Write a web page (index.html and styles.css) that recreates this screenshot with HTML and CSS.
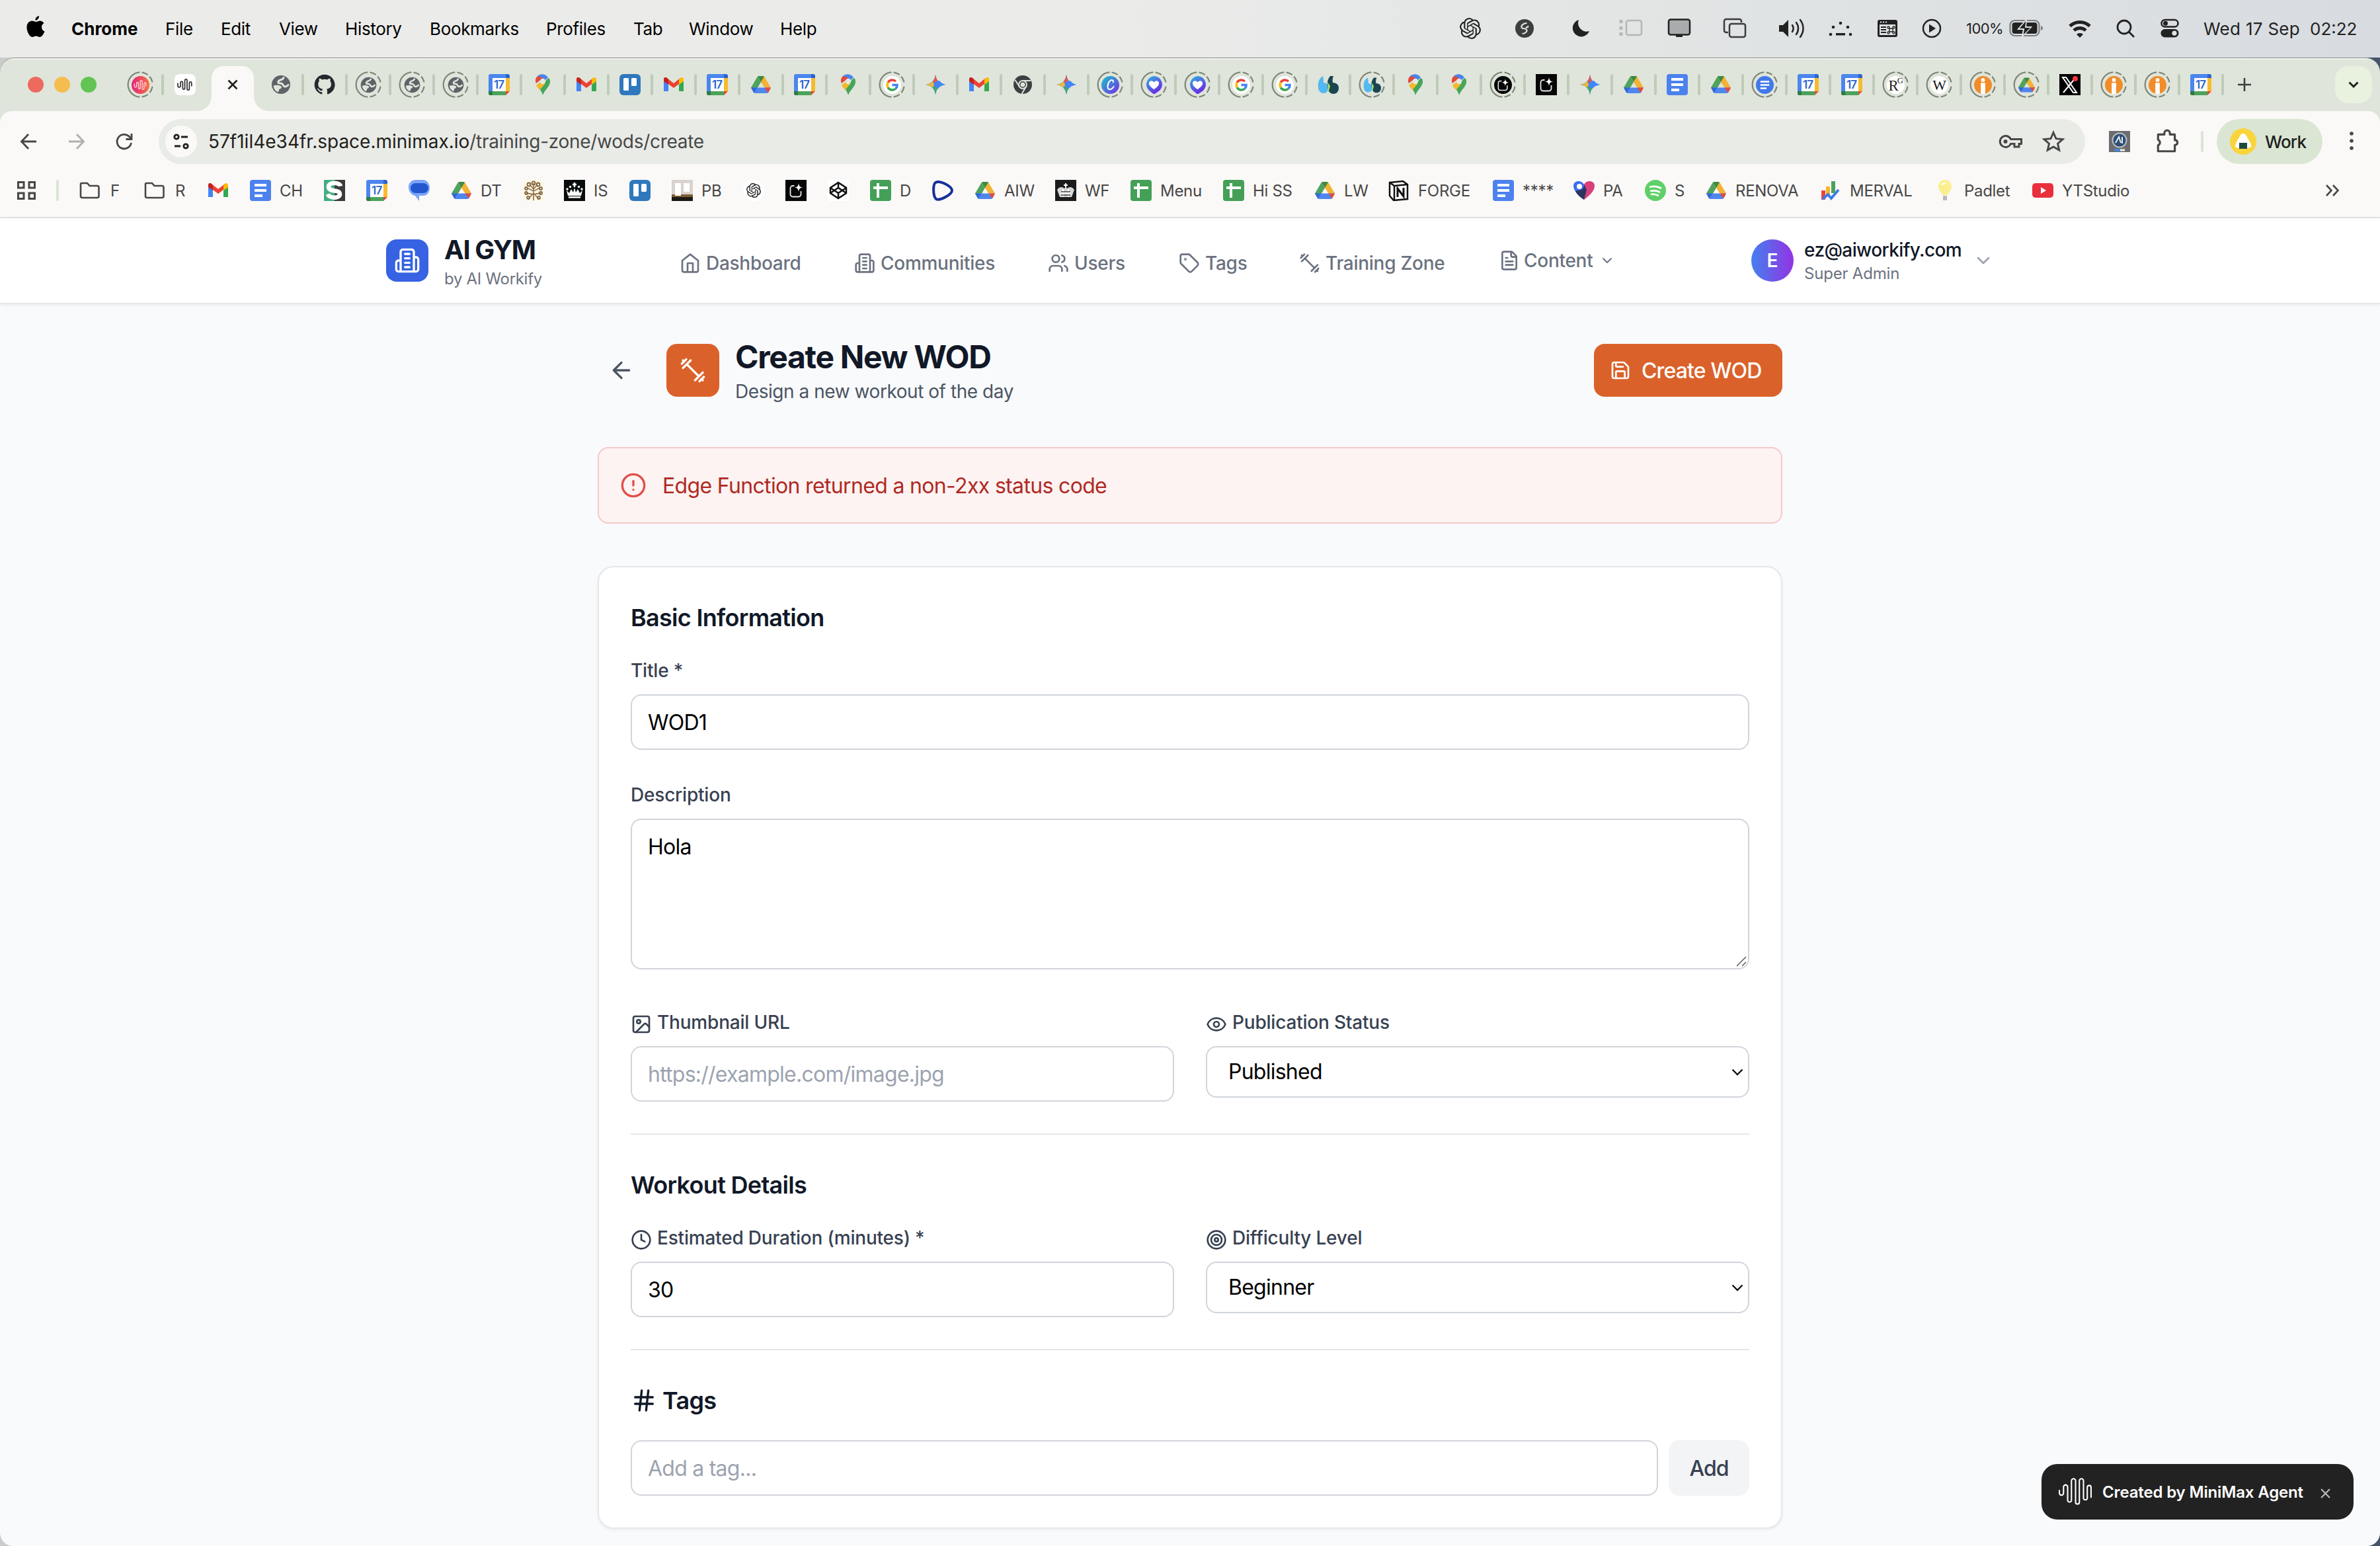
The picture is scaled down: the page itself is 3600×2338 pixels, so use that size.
FILE: index.html
```html
<!DOCTYPE html>
<html lang="en">
<head>
<meta charset="utf-8">
<title>AI GYM - Create New WOD</title>
<link rel="stylesheet" href="styles.css">
</head>
<body>
<svg class="gradients" aria-hidden="true">
  <defs>
    <linearGradient id="canva" x1="0" y1="0" x2="1" y2="1"><stop offset="0" stop-color="#16c5cb"/><stop offset="1" stop-color="#7a2be6"/></linearGradient>
    <linearGradient id="heartg" x1="0" y1="0" x2=".6" y2="1"><stop offset="0" stop-color="#2fb6dc"/><stop offset="1" stop-color="#6a25e8"/></linearGradient>
    <linearGradient id="mm" x1="0" y1="0" x2="1" y2="0"><stop offset="0" stop-color="#e0257c"/><stop offset="1" stop-color="#f8703f"/></linearGradient>
  </defs>
</svg>
<svg class="sprite" aria-hidden="true">
  <symbol id="globe" viewBox="0 0 32 32"><circle cx="16" cy="16" r="14" fill="#5f6368"/><path d="M20 5.500c-1 2.500-3 3-5 3.500-2.500.700-3.500 2-3 4.500 2 1 4 .200 5.500 1 2 1.200 1.500 4 4 4.500 2 .300 4-1 5.500-2.500" fill="none" stroke="#dfe5da" stroke-width="3" stroke-linecap="round" stroke-linejoin="round"/><path d="M4.500 17.500c4-1.500 9-1 12 1 1 2.500-1 4-3.500 4.500.5 2-.5 3.500-2 4.200-3.500-1.700-6-5-6.500-9.700z" fill="#dfe5da"/></symbol>
  <symbol id="github" viewBox="0 0 24 24"><path fill="#24292f" d="M12 .5C5.600.5.5 5.600.5 12c0 5.100 3.300 9.400 7.900 10.900.6.1.8-.2.8-.6v-2c-3.200.7-3.900-1.500-3.900-1.500-.5-1.300-1.300-1.700-1.300-1.700-1-.7.1-.7.1-.7 1.200.1 1.800 1.200 1.800 1.200 1 1.800 2.700 1.300 3.400 1 .1-.8.4-1.300.7-1.600-2.600-.3-5.300-1.300-5.300-5.700 0-1.300.5-2.300 1.200-3.100-.1-.3-.5-1.500.1-3.100 0 0 1-.3 3.200 1.200a11 11 0 0 1 5.800 0c2.200-1.500 3.200-1.200 3.200-1.200.6 1.600.2 2.800.1 3.100.7.8 1.200 1.800 1.200 3.100 0 4.400-2.700 5.400-5.300 5.700.4.4.8 1.100.8 2.100v3.200c0 .3.2.7.8.6 4.600-1.500 7.900-5.800 7.900-10.900C23.500 5.600 18.400.5 12 .5z"/></symbol>
  <symbol id="cal" viewBox="0 0 32 32"><path d="M3 0h23v6H0V3a3 3 0 0 1 3-3z" fill="#4b86ee"/><path d="M26 0h3a3 3 0 0 1 3 3v4h-6z" fill="#2b63cf"/><path d="M0 5h6v21H0z" fill="#4b86ee"/><path d="M26 6h6v20h-6z" fill="#f6bb2f"/><path d="M6 26h20v6H3a3 3 0 0 1-3-3v-3z" fill="#4ba35b"/><path d="M0 26h6v6H3a3 3 0 0 1-3-3z" fill="#2f7a43"/><path d="M26 32v-6h6z" fill="#e34a3c"/><path d="M6 6h20v20H6z" fill="#fff"/><text x="16" y="22" font-size="17" font-weight="600" fill="#2b63cf" text-anchor="middle" textLength="16">17</text></symbol>
  <symbol id="maps" viewBox="0 0 32 32"><path d="M26 7c2 4 1 8-1 11-3 5-7 8-9 14-1-4-3-7-5-10L24 6z" fill="#45a65a"/><path d="M8 3c4-4 12-4 16 2l-7 7z" fill="#4a84ee"/><path d="M8 3c-3 3-4 7-2 11l5-4 5-1-1-4z" fill="#e04a3d"/><path d="M12 12l-6 5c1 2.500 3 4.500 5.500 7l8-9.500z" fill="#f3b92e"/><circle cx="16" cy="11" r="4.200" fill="#e3e9e0"/></symbol>
  <symbol id="gmail" viewBox="0 0 32 32"><path d="M1 8v18h7V13z" fill="#4285f4"/><path d="M31 8v18h-7V13z" fill="#34a853"/><path d="M1 8c0-3 3-4 5-2l10 8 10-8v7.500L16 21 1 10z" fill="#ea4335"/><path d="M24 8l2-2c2-2 5-1 5 2v3l-7 5z" fill="#fbbc04"/><path d="M1 8c0-3 3-4 5-2l2 2v8l-7-5z" fill="#c5221f"/></symbol>
  <symbol id="trello" viewBox="0 0 32 32"><rect width="32" height="32" rx="6" fill="#2f78bd"/><rect x="6" y="6" width="8" height="19" rx="1.500" fill="#fff"/><rect x="18" y="6" width="8" height="12" rx="1.500" fill="#fff"/></symbol>
  <symbol id="drive" viewBox="0 0 32 32"><path d="M11 3.500l5 8.500-5 8.500L5.500 28 1 20.500z" fill="#4fa35c"/><path d="M21 3.500l10 17h-9.500L16 12l-5-8.500z" fill="#f3b233"/><path d="M11 3.500Q12 3 13 3h6q1 0 2 .5L16 12z" fill="#3b8a45"/><path d="M1 20.500h30L27 28q-1 1-2 1H7q-1 0-2-1z" fill="#4f86ee"/><path d="M21.500 20.500H31L27 28.200z" fill="#e34a3c"/><path d="M1 20.500h9.500L5.500 28.400z" fill="#3468d4"/></symbol>
  <symbol id="google" viewBox="0 0 32 32"><circle cx="16" cy="16" r="16" fill="#fff"/><g fill="none" stroke-width="4.200"><path d="M22.500 9.500A9 9 0 0 0 8.500 11.500" stroke="#ea4335"/><path d="M8.500 11.500a9 9 0 0 0 0 9" stroke="#fbbc04"/><path d="M8.500 20.500a9 9 0 0 0 13.500 2.300" stroke="#34a853"/><path d="M22 22.800A9 9 0 0 0 24.900 16H16" stroke="#4285f4"/></g></symbol>
  <symbol id="gemini" viewBox="0 0 32 32"><path d="M16 1c1.500 9 6 13.500 15 15-9 1.500-13.500 6-15 15-1.500-9-6-13.500-15-15 9-1.500 13.500-6 15-15z" fill="#4285f4"/><path d="M16 1c1 6 3 10 6 12l-10 1-2-1c3-2 5-6 6-12z" fill="#e4564a"/><path d="M1 16c6-1 9-3 11-5l2 5-2 5c-2-2-5-4-11-5z" fill="#e9b93c"/><path d="M16 31c-1-6-2-8-5-11l5-3 4 4c-2 2-3 5-4 10z" fill="#44a865"/><path d="M14 12l8-2c2 3 5 5 9 6-6 1-9 3-11 6l-6-3z" fill="#4285f4"/></symbol>
  <symbol id="chrome" viewBox="0 0 32 32"><circle cx="16" cy="16" r="14" fill="#3c4043"/><circle cx="16" cy="16" r="6" fill="none" stroke="#dfe5da" stroke-width="2"/><circle cx="16" cy="16" r="3.500" fill="#dfe5da"/><path d="M16 10h12.500M11 19L4.500 9M21 19l-6.500 11" stroke="#dfe5da" stroke-width="2"/></symbol>
  <symbol id="canv" viewBox="0 0 32 32"><circle cx="16" cy="16" r="16" fill="url(#canva)"/><path d="M21 11c1-4-3-5-6-2-5 5-5 15 0 15 3 0 5-2 7-5" fill="none" stroke="#fff" stroke-width="2.400" stroke-linecap="round"/></symbol>
  <symbol id="heart" viewBox="0 0 32 32"><path d="M16 0a15 15 0 0 1 8 27.500L16 33l-6-5A15 15 0 0 1 16 0z" fill="url(#heartg)"/><path d="M16 24c-5-4-9-7-9-11 0-5 6-6 9-2 3-4 9-3 9 2 0 4-4 7-9 11z" fill="#fff"/></symbol>
  <symbol id="quote" viewBox="0 0 32 32"><path d="M8 3C3 6 0 12 1 20c0 6 4 9 8 9s7-3 7-8-3-8-7-8c0-4 0-7-1-10z" fill="#54b8f2"/><path d="M19 3h5c-1 3-2 6-1 10 6 0 9 4 9 8 0 5-3 9-8 9s-8-4-9-10 0-12 4-17z" fill="#1c4552"/><path d="M15 12l4 6-3 11c-1-4 0-10-1-17z" fill="#a7e868"/></symbol>
  <symbol id="blk" viewBox="0 0 32 32"><rect width="32" height="32" fill="#050505"/><path d="M13.500 9H11a3.500 3.500 0 0 0-3.500 3.500V22a3.500 3.500 0 0 0 3.500 3.500h9a3.500 3.500 0 0 0 3.500-3.500v-5" fill="none" stroke="#e8e8e8" stroke-width="1.800"/><path d="M20 5c.6 4.500 2 6 6.500 6.500-4.500.5-5.900 2-6.500 6.500-.6-4.500-2-6-6.500-6.500 4.500-.5 5.900-2 6.500-6.500z" fill="#fff"/></symbol>
  <symbol id="docs" viewBox="0 0 32 32"><rect width="32" height="32" rx="4" fill="#4d82ee"/><path d="M7 8h18M7 16h18M7 24h12" stroke="#fff" stroke-width="4"/></symbol>
  <symbol id="docsr" viewBox="0 0 32 32"><circle cx="16" cy="16" r="16" fill="#4179ea"/><path d="M8 10h16M8 16h16M8 22h11" stroke="#fff" stroke-width="3"/></symbol>
  <symbol id="rg" viewBox="0 0 32 32"><circle cx="16" cy="16" r="16" fill="#fff"/><text class="serif" x="12" y="26" font-size="27" text-anchor="middle" fill="#222">R</text><text class="serif" x="24" y="13" font-size="15" text-anchor="middle" fill="#222">G</text></symbol>
  <symbol id="wiki" viewBox="0 0 32 32"><circle cx="16" cy="16" r="16" fill="#fff"/><text class="serif" x="16" y="25" font-size="26" text-anchor="middle" fill="#111">W</text></symbol>
  <symbol id="info" viewBox="0 0 32 32"><circle cx="16" cy="16" r="16" fill="#f28c28"/><circle cx="16" cy="7" r="3.500" fill="#fff"/><path d="M12 12h8v20h-8z" fill="#fff"/></symbol>
  <symbol id="xcom" viewBox="0 0 32 32"><rect width="32" height="32" fill="#000"/><path d="M5 5h5l16 23h-5z" fill="none" stroke="#fff" stroke-width="2"/><path d="M25 5L6 28" stroke="#fff" stroke-width="2"/><circle cx="24" cy="7" r="4" fill="#f4373c"/></symbol>
  <symbol id="wave" viewBox="0 0 48 40"><path d="M1 18v4a3 3 0 0 0 6 0V13a3 3 0 0 1 6 0v20a3 3 0 0 0 5.500 0V4a3 3 0 0 1 6 0v19M24.500 30v5a2.700 2.700 0 0 0 5.500 0V4a3 3 0 0 1 6 0v26a3 3 0 0 0 5.500 0V13a2.800 2.800 0 0 1 5.500 0v15M24.500 10v19" fill="none" stroke="currentColor" stroke-width="2" stroke-linecap="round"/></symbol>
  <symbol id="waves" viewBox="0 0 32 32"><path d="M5 14v4a2 2 0 0 0 4 0v-5a1.700 1.700 0 0 1 3.400 0v9a1.700 1.700 0 0 0 3.200 0V9.500a1.700 1.700 0 0 1 3.400 0v13a1.700 1.700 0 0 0 3.400 0v-9a1.700 1.700 0 0 1 3.400 0V18" fill="none" stroke="currentColor" stroke-width="1.600" stroke-linecap="round"/></symbol>
  <symbol id="sheet" viewBox="0 0 32 32"><rect width="32" height="32" rx="4" fill="#45a057"/><path d="M12 5v22M5 12h22" stroke="#fff" stroke-width="4"/></symbol>
  <symbol id="openai" viewBox="0 0 24 24"><path fill="currentColor" d="M22.2819 9.8211a5.9847 5.9847 0 0 0-.5157-4.9108 6.0462 6.0462 0 0 0-6.5098-2.9A6.0651 6.0651 0 0 0 4.9807 4.1818a5.9847 5.9847 0 0 0-3.9977 2.9 6.0462 6.0462 0 0 0 .7427 7.0966 5.98 5.98 0 0 0 .511 4.9107 6.051 6.051 0 0 0 6.5146 2.9001A5.9847 5.9847 0 0 0 13.2599 24a6.0557 6.0557 0 0 0 5.7718-4.2058 5.9894 5.9894 0 0 0 3.9977-2.9001 6.0557 6.0557 0 0 0-.7475-7.0729zm-9.022 12.6081a4.4755 4.4755 0 0 1-2.8764-1.0408l.1419-.0804 4.7783-2.7582a.7948.7948 0 0 0 .3927-.6813v-6.7369l2.02 1.1686a.071.071 0 0 1 .038.052v5.5826a4.504 4.504 0 0 1-4.4945 4.4944zm-9.6607-4.1254a4.4708 4.4708 0 0 1-.5346-3.0137l.142.0852 4.783 2.7582a.7712.7712 0 0 0 .7806 0l5.8428-3.3685v2.3324a.0804.0804 0 0 1-.0332.0615L9.74 19.9502a4.4992 4.4992 0 0 1-6.1408-1.6464zM2.3408 7.8956a4.485 4.485 0 0 1 2.3655-1.9728V11.6a.7664.7664 0 0 0 .3879.6765l5.8144 3.3543-2.0201 1.1685a.0757.0757 0 0 1-.071 0l-4.8303-2.7865A4.504 4.504 0 0 1 2.3408 7.872zm16.5963 3.8558L13.1038 8.364 15.1192 7.2a.0757.0757 0 0 1 .071 0l4.8303 2.7913a4.4944 4.4944 0 0 1-.6765 8.1042v-5.6772a.79.79 0 0 0-.407-.667zm2.0107-3.0231l-.142-.0852-4.7735-2.7818a.7759.7759 0 0 0-.7854 0L9.409 9.2297V6.8974a.0662.0662 0 0 1 .0284-.0615l4.8303-2.7866a4.4992 4.4992 0 0 1 6.6802 4.66zM8.3065 12.863l-2.02-1.1638a.0804.0804 0 0 1-.038-.0567V6.0742a4.4992 4.4992 0 0 1 7.3757-3.4537l-.142.0805L8.704 5.459a.7948.7948 0 0 0-.3927.6813zm1.0976-2.3654l2.602-1.4998 2.6069 1.4998v2.9994l-2.5974 1.4997-2.6067-1.4997Z"/></symbol>
  <symbol id="folder" viewBox="0 0 32 32"><path d="M3.500 5H12l3.500 4H27a2.500 2.500 0 0 1 2.500 2.500v13A2.500 2.500 0 0 1 27 27H4.500A2.500 2.500 0 0 1 2 24.500v-18A1.500 1.500 0 0 1 3.500 5z" fill="none" stroke="#474747" stroke-width="2.600"/></symbol>
  <symbol id="ring" viewBox="0 0 40 40"><path d="M18.500 1.300a18.800 18.800 0 0 0 0 37.400M23.500 1.600a18.800 18.800 0 0 1 7.500 3.100M34.700 8.300a18.800 18.800 0 0 1 3.600 7.300M38.400 23.500a18.800 18.800 0 0 1-3.400 7.800M31 35.300a18.800 18.800 0 0 1-7.500 3.100" fill="none" stroke="#7e8678" stroke-width="2.200" stroke-linecap="round"/></symbol>
  <symbol id="building" viewBox="0 0 24 24"><path d="M6 22V4a2 2 0 0 1 2-2h8a2 2 0 0 1 2 2v18ZM6 12H4a2 2 0 0 0-2 2v6a2 2 0 0 0 2 2h2M18 9h2a2 2 0 0 1 2 2v9a2 2 0 0 1-2 2h-2M10 6h4M10 10h4M10 14h4M10 18h4"/></symbol>
  <symbol id="dumbbell" viewBox="0 0 24 24"><path d="m6.500 6.500 11 11M21 21l-1-1M3 3l1 1M18 22l4-4M2 6l4-4M3 10l7-7M14 21l7-7"/></symbol>
  <symbol id="chev" viewBox="0 0 24 24"><path d="m6 9 6 6 6-6"/></symbol>
</svg>

<header class="menubar">
  <nav class="menus">
    <svg class="apple" viewBox="0 0 27 32"><path d="M20 7.500c-2.500 0-4 1.600-6 1.600S10.500 7.600 8 7.600C4 7.600 0 11 0 17.500 0 24 4.500 32 8.500 32c2 0 3-1.400 5.500-1.400s3.300 1.400 5.500 1.400c3.500 0 6.200-5 7.500-8.500-2.800-1.200-4.500-3.500-4.500-6.500 0-2.500 1.300-4.700 3.500-6C24.300 8.500 22 7.500 20 7.500zM18.500 0c.3 3.500-2.500 6.800-5.500 6.800C12.700 3.500 15.500.300 18.500 0z"/></svg>
    <b>Chrome</b><span>File</span><span>Edit</span><span>View</span><span>History</span><span>Bookmarks</span><span>Profiles</span><span>Tab</span><span>Window</span><span>Help</span>
  </nav>
  <div class="status">
    <svg><use href="#openai"/></svg>
    <svg viewBox="0 0 32 32"><circle cx="16" cy="16" r="14" fill="#3d3e3e"/><path d="M19.500 8c-5 0-9 3.500-8 6.500s6 .5 7.500 3-1 6.500-6.500 6.500M21 12c1 2-1 3-3 2" fill="none" stroke="#e6e8e7" stroke-width="2"/></svg>
    <svg viewBox="0 0 32 32"><path d="M12 3a13 13 0 1 0 16 17A13 13 0 0 1 12 3z"/></svg>
    <svg class="wide" viewBox="0 0 38 32" fill="none" stroke="#b4b7b7" stroke-width="2.600"><rect x="12" y="4" width="23" height="22" rx="3"/><path d="M4 3v5M4 13v5M4 22v5" stroke-width="5"/></svg>
    <svg class="wide" viewBox="0 0 38 32"><rect x="3" y="2.500" width="32" height="23" rx="3" fill="#a9abac" stroke="#222" stroke-width="2.500"/><path d="M14 25h10v4H14z"/></svg>
    <svg class="wide" viewBox="0 0 38 32" fill="none" stroke="#3a3b3c" stroke-width="2.500"><path d="M9 22H6a3 3 0 0 1-3-3V5a3 3 0 0 1 3-3h20a3 3 0 0 1 3 3v2"/><rect x="11" y="9" width="24" height="20" rx="3"/></svg>
    <svg class="vol" viewBox="0 0 40 32"><path d="M1 11h6l8-8v26l-8-8H1z"/><path d="M21 11c2 3 2 7 0 10M27 7c4 5 4 13 0 18M33 3c6 8 6 18 0 26" fill="none" stroke="#222" stroke-width="2.500" stroke-linecap="round"/></svg>
    <svg class="wide" viewBox="0 0 38 32"><circle cx="19" cy="8" r="2.300"/><circle cx="8" cy="14" r="2.300"/><circle cx="30" cy="14" r="2.300"/><circle cx="4" cy="25" r="2.300"/><circle cx="34" cy="25" r="2.300"/><path d="M12 23h14v3.500H12z"/></svg>
    <svg viewBox="0 0 32 32"><path fill-rule="evenodd" d="M4 3h24a3 3 0 0 1 3 3v20a3 3 0 0 1-3 3H4a3 3 0 0 1-3-3V6a3 3 0 0 1 3-3zm0 7v16h24V10z"/><path d="M6 14h8M6 18h8M6 22h8" stroke="#222" stroke-width="2"/><path d="M19 16h5v5h-5zM19 16h-1.500a1.500 1.500 0 1 1 1.500-1.500zM24 16h1.500a1.500 1.500 0 1 0-1.500-1.500zM19 21h-1.500a1.500 1.500 0 1 0 1.500 1.500zM24 21h1.500a1.500 1.500 0 1 1-1.500 1.500z" fill="none" stroke="#222" stroke-width="1.300"/><path d="M5 6.500h2M9 6.500h2M13 6.500h2" stroke="#eee" stroke-width="2"/></svg>
    <svg viewBox="0 0 32 32"><circle cx="16" cy="16" r="13" fill="none" stroke="#222" stroke-width="2.500"/><path d="M12 9.500L22 16l-10 6.500z"/></svg>
    <span class="pct">100%</span>
    <svg class="batt" viewBox="0 0 52 32"><rect x="1.500" y="4" width="44" height="23" rx="7" fill="none" stroke="#7d8082" stroke-width="2.200"/><rect x="4.500" y="7" width="38" height="17" rx="4"/><path d="M48 12c4 1 4 6 0 7z" fill="#7d8082"/><path d="M26 3L14 17h8l-2 11 13-14h-8z" stroke="#dfe2e4" stroke-width="2"/><path d="M25 5L16 16h8l-2 9 10-10h-8z"/></svg>
    <svg class="wide" viewBox="0 0 38 32" fill="none" stroke="#222" stroke-width="5"><path d="M4 12.500a21.500 21.500 0 0 1 30 0M10 19a13 13 0 0 1 18 0"/><path d="M19 30l-5-5a7 7 0 0 1 10 0z" fill="#222" stroke="none"/></svg>
    <svg viewBox="0 0 32 32" fill="none" stroke="#222" stroke-width="2.800"><circle cx="14" cy="14" r="10"/><path d="M21 21l8 8"/></svg>
    <svg viewBox="0 0 32 32"><rect x="3.500" y="3" width="25" height="10.500" rx="5.200" fill="none" stroke="#222" stroke-width="2.500"/><circle cx="9.500" cy="8.200" r="3.500"/><rect x="2.500" y="17" width="27" height="12.500" rx="6.200"/><circle cx="23" cy="23.200" r="3.600" fill="#e0e3e5"/></svg>
    <span class="day">Wed 17 Sep</span><span class="time">02:22</span>
  </div>
</header>

<div class="window">
  <div class="tabstrip">
    <div class="lights"><i class="red"></i><i class="amber"></i><i class="green"></i></div>
    <div class="pinned">
      <div class="tab sep"><svg class="ring"><use href="#ring"/></svg><svg viewBox="0 0 32 32" class="fav small white"><circle cx="16" cy="16" r="16" fill="url(#mm)"/><use href="#waves"/></svg></div>
      <div class="tab"><svg viewBox="0 0 32 32" class="fav"><rect width="32" height="32" rx="8" fill="#fff"/><use href="#waves"/></svg></div>
    </div>
    <div class="active-tab"><svg viewBox="0 0 16 16"><path d="M1.500 1.500l13 13M14.500 1.500l-13 13"/></svg></div>
    <div class="tabs">
      <div class="tab sep"><svg class="fav"><use href="#globe"/></svg></div>
      <div class="tab sep"><svg class="fav"><use href="#github"/></svg></div>
      <div class="tab sep"><svg class="ring"><use href="#ring"/></svg><svg class="fav small"><use href="#globe"/></svg></div>
      <div class="tab sep"><svg class="ring"><use href="#ring"/></svg><svg class="fav small"><use href="#globe"/></svg></div>
      <div class="tab sep"><svg class="ring"><use href="#ring"/></svg><svg class="fav small"><use href="#globe"/></svg></div>
      <div class="tab sep"><svg class="fav"><use href="#cal"/></svg></div>
      <div class="tab sep"><svg class="fav"><use href="#maps"/></svg></div>
      <div class="tab sep"><svg class="fav"><use href="#gmail"/></svg></div>
      <div class="tab sep"><svg class="fav"><use href="#trello"/></svg></div>
      <div class="tab sep"><svg class="fav"><use href="#gmail"/></svg></div>
      <div class="tab sep"><svg class="fav"><use href="#cal"/></svg></div>
      <div class="tab sep"><svg class="fav"><use href="#drive"/></svg></div>
      <div class="tab sep"><svg class="fav"><use href="#cal"/></svg></div>
      <div class="tab sep"><svg class="fav"><use href="#maps"/></svg></div>
      <div class="tab sep"><svg class="ring"><use href="#ring"/></svg><svg class="fav small"><use href="#google"/></svg></div>
      <div class="tab sep"><svg class="fav"><use href="#gemini"/></svg></div>
      <div class="tab sep"><svg class="fav"><use href="#gmail"/></svg></div>
      <div class="tab sep"><svg class="fav"><use href="#chrome"/></svg></div>
      <div class="tab sep"><svg class="fav"><use href="#gemini"/></svg></div>
      <div class="tab sep"><svg class="ring"><use href="#ring"/></svg><svg class="fav small"><use href="#canv"/></svg></div>
      <div class="tab sep"><svg class="ring"><use href="#ring"/></svg><svg class="fav small"><use href="#heart"/></svg></div>
      <div class="tab sep"><svg class="ring"><use href="#ring"/></svg><svg class="fav small"><use href="#heart"/></svg></div>
      <div class="tab sep"><svg class="ring"><use href="#ring"/></svg><svg class="fav small"><use href="#google"/></svg></div>
      <div class="tab sep"><svg class="ring"><use href="#ring"/></svg><svg class="fav small"><use href="#google"/></svg></div>
      <div class="tab sep"><svg class="fav"><use href="#quote"/></svg></div>
      <div class="tab sep"><svg class="ring"><use href="#ring"/></svg><svg class="fav small"><use href="#quote"/></svg></div>
      <div class="tab sep"><svg class="fav"><use href="#maps"/></svg></div>
      <div class="tab sep"><svg class="fav"><use href="#maps"/></svg></div>
      <div class="tab sep"><svg class="ring"><use href="#ring"/></svg><svg class="fav small round"><use href="#blk"/></svg></div>
      <div class="tab sep"><svg class="fav"><use href="#blk"/></svg></div>
      <div class="tab sep"><svg class="fav"><use href="#gemini"/></svg></div>
      <div class="tab sep"><svg class="fav"><use href="#drive"/></svg></div>
      <div class="tab sep"><svg class="fav"><use href="#docs"/></svg></div>
      <div class="tab sep"><svg class="fav"><use href="#drive"/></svg></div>
      <div class="tab sep"><svg class="ring"><use href="#ring"/></svg><svg class="fav small"><use href="#docsr"/></svg></div>
      <div class="tab sep"><svg class="fav"><use href="#cal"/></svg></div>
      <div class="tab sep"><svg class="fav"><use href="#cal"/></svg></div>
      <div class="tab sep"><svg class="ring"><use href="#ring"/></svg><svg class="fav small"><use href="#rg"/></svg></div>
      <div class="tab sep"><svg class="ring"><use href="#ring"/></svg><svg class="fav small"><use href="#wiki"/></svg></div>
      <div class="tab sep"><svg class="ring"><use href="#ring"/></svg><svg class="fav small"><use href="#info"/></svg></div>
      <div class="tab sep"><svg class="ring"><use href="#ring"/></svg><svg class="fav small"><use href="#drive"/></svg></div>
      <div class="tab sep"><svg class="fav"><use href="#xcom"/></svg></div>
      <div class="tab sep"><svg class="ring"><use href="#ring"/></svg><svg class="fav small"><use href="#info"/></svg></div>
      <div class="tab sep"><svg class="ring"><use href="#ring"/></svg><svg class="fav small"><use href="#info"/></svg></div>
      <div class="tab sep"><svg class="fav"><use href="#cal"/></svg></div>
      <div class="tab"><svg class="plus" viewBox="0 0 22 22"><path d="M11 1v20M1 11h20"/></svg></div>
    </div>
    <div class="tabsearch"><svg viewBox="0 0 16 10"><path d="M1.500 1.500L8 8l6.500-6.500"/></svg></div>
  </div>

  <div class="toolbar">
    <div class="navbtns">
      <svg viewBox="0 0 32 32"><path d="M27 16H5M15 5L4.500 16 15 27"/></svg>
      <svg class="off" viewBox="0 0 32 32"><path d="M5 16h22M17 5l10.500 11L17 27"/></svg>
      <svg viewBox="0 0 32 32"><path d="M26.500 18A10.800 10.800 0 1 1 23.500 8.500L27 12M27 4v8.500h-8.500"/></svg>
    </div>
    <div class="omnibox">
      <span class="tune"><svg viewBox="0 0 26 26"><circle cx="6" cy="6" r="3.200"/><path d="M13 6h10M3 20h9"/><circle cx="20" cy="20" r="3.200"/></svg></span>
      <span class="url"><span class="host">57f1il4e34fr.space.minimax.io</span><span class="path">/training-zone/wods/create</span></span>
      <svg class="key" viewBox="0 0 38 32" fill="none" stroke="#474747" stroke-width="3"><path d="M19.500 12.500A8.500 8.500 0 1 0 19.500 19.500H25V24h7v-4.500h3.500v-7z"/><circle cx="11.500" cy="16" r="3" fill="#474747" stroke="none"/></svg>
      <svg class="star" viewBox="0 0 32 32" fill="none" stroke="#474747" stroke-width="2.600"><path d="M16 4l3.600 8.200 8.900.8-6.700 5.900 2 8.700L16 23l-7.800 4.600 2-8.700L3.500 13l8.900-.8z"/></svg>
    </div>
    <svg class="ext" viewBox="0 0 32 32"><rect width="32" height="32" fill="#6b6d70"/><circle cx="16" cy="14" r="10.500" fill="#2c4e73" stroke="#b9bdc2" stroke-width="2"/><path d="M10 18l5-9 3 9M20 9v10" stroke="#e6ecf2" stroke-width="2" fill="none"/><path d="M8 29h9" stroke="#3f8cf0" stroke-width="3"/><path d="M17 29h7" stroke="#eee" stroke-width="3"/></svg>
    <svg class="puzzle" viewBox="0 0 36 36" fill="none" stroke="#474747" stroke-width="3"><path d="M5 8h9V6a4 4 0 0 1 8 0v2h7v8h1a3.600 3.600 0 0 1 0 7h-1v9H5v-8.500a4.300 4.300 0 0 0 0-8z" stroke-linejoin="round"/></svg>
    <i class="tsep"></i>
    <div class="profile"><svg viewBox="0 0 40 40"><circle cx="20" cy="20" r="20" fill="#f9d43c"/><path d="M20 8c4 0 5 4 8 9s5 8 4 11-24 3-24 0 1-6 4-11 4-9 8-9z" fill="#fff"/><path d="M14 22h12v9H14z" fill="#1d4a3f"/></svg><span>Work</span></div>
    <svg class="kebab" viewBox="0 0 8 32"><circle cx="4" cy="4" r="2.800"/><circle cx="4" cy="15" r="2.800"/><circle cx="4" cy="26" r="2.800"/></svg>
  </div>

  <div class="bookmarks">
    <span class="bm"><svg viewBox="0 0 32 32" fill="none" stroke="#474747" stroke-width="3"><path d="M3.500 3.500h8.500v8.500H3.500zM20 3.500h8.500v8.500H20zM3.500 20h8.500v8.500H3.500zM20 20h8.500v8.500H20z"/></svg></span>
    <span class="bm"><i class="tsep"></i></span>
    <span class="bm dir"><svg><use href="#folder"/></svg>F</span>
    <span class="bm dir"><svg><use href="#folder"/></svg>R</span>
    <span class="bm"><svg><use href="#gmail"/></svg></span>
    <span class="bm"><svg><use href="#docs"/></svg>CH</span>
    <span class="bm"><svg viewBox="0 0 32 32"><path d="M0 0h16v32H0z" fill="#45ad80"/><path d="M16 0h16v32H16z" fill="#3b3b3b"/><path d="M25 9.500c-1-6-18-7-18 1 0 9 17 3 17 11 0 7-16 7-18 0" fill="none" stroke="#fff" stroke-width="6.500"/></svg></span>
    <span class="bm"><svg><use href="#cal"/></svg></span>
    <span class="bm"><svg viewBox="0 0 32 32"><path d="M11 0h11c6 0 10 6 10 12 0 7-4 12-10 12h-6v8l-6-8C4 23 0 17 0 11 0 4 5 0 11 0z" fill="#7ba5fa"/><rect x="3" y="5" width="27" height="15" rx="7.500" fill="#2257cf"/></svg></span>
    <span class="bm"><svg><use href="#drive"/></svg>DT</span>
    <span class="bm"><svg viewBox="0 0 32 32"><rect width="32" height="32" fill="#fbf8e8"/><path d="M16 5v26M16 17L6 12M16 17l10-5M16 22L5 20M16 22l11-2M9 28l7-8 7 8M10 7l6 7 6-7" stroke="#9b7a55" stroke-width="1.800" fill="none"/><g fill="none" stroke="#85643f" stroke-width="1.800"><circle cx="16" cy="5" r="2.500"/><circle cx="9" cy="7" r="2.500"/><circle cx="23" cy="7" r="2.500"/><circle cx="5" cy="13" r="2"/><circle cx="27" cy="13" r="2"/><circle cx="5" cy="20" r="2"/><circle cx="27" cy="20" r="2"/><circle cx="8" cy="27" r="2"/><circle cx="24" cy="27" r="2"/></g></svg></span>
    <span class="bm"><svg viewBox="0 0 32 32"><rect width="32" height="32" fill="#070b0b"/><path d="M6 24L4 16l4 4 3-6 3 5 2-7 2 7 3-5 3 6 4-4-2 8zM7 25h18v2.500H7z" fill="#fff"/><path d="M16 4v7M13 7h6" stroke="#fff" stroke-width="2.500"/><g fill="#fff"><circle cx="5" cy="14" r="1.700"/><circle cx="9.500" cy="10.500" r="1.700"/><circle cx="22.500" cy="10.500" r="1.700"/><circle cx="27" cy="14" r="1.700"/></g></svg>IS</span>
    <span class="bm"><svg><use href="#trello"/></svg></span>
    <span class="bm"><svg viewBox="0 0 32 32"><rect width="32" height="32" fill="#d9d2cf"/><path d="M0 22h32v5H0z" fill="#7c5c35"/><path d="M0 26h32v6H0z" fill="#1c1a14"/><rect x="5" y="5" width="9" height="19" fill="#fff"/><rect x="18" y="5" width="9" height="13" fill="#fff"/></svg>PB</span>
    <span class="bm"><svg viewBox="0 0 32 32"><circle cx="16" cy="16" r="16" fill="#fff"/><use href="#openai" x="5" y="5" width="22" height="22"/></svg></span>
    <span class="bm"><svg><use href="#blk"/></svg></span>
    <span class="bm"><svg viewBox="0 0 32 32"><rect width="32" height="32" rx="3" fill="#fff"/><path d="M16 4l12 8v8l-12 8-12-8v-8zM16 4v8M16 20v8M4 12l12 8 12-8M4 20l12-8 12 8" fill="none" stroke="#111" stroke-width="2.500"/></svg></span>
    <span class="bm"><svg><use href="#sheet"/></svg>D</span>
    <span class="bm"><svg viewBox="0 0 32 32"><path d="M5 4c7-4 25 6 25 12S12 32 6 29C1 25 1 7 5 4z" fill="none" stroke="#16309c" stroke-width="4"/></svg></span>
    <span class="bm"><svg><use href="#drive"/></svg>AIW</span>
    <span class="bm"><svg viewBox="0 0 32 32"><rect width="32" height="32" fill="#1b1b1b"/><path d="M7 26L3 15c3-5 8-5 11-2l2-3 2 3c3-3 8-3 11 2l-4 11z" fill="#d5d5d5"/><path d="M16 5v6M13 8h6M8 20h16M12 14v12M20 14v12" stroke="#fff" stroke-width="2"/><path d="M9 18h14M9 23h14" stroke="#444" stroke-width="1.500"/></svg>WF</span>
    <span class="bm"><svg><use href="#sheet"/></svg>Menu</span>
    <span class="bm"><svg><use href="#sheet"/></svg>Hi SS</span>
    <span class="bm"><svg><use href="#drive"/></svg>LW</span>
    <span class="bm"><svg viewBox="0 0 32 32"><path d="M2 4l20-2 7 5v22l-21 2-6-7z" fill="#fff" stroke="#111" stroke-width="2.500"/><path d="M2 4l7 5 20-2M9 9v22" fill="none" stroke="#111" stroke-width="2.500"/><path d="M14 26V13l9 12V12" fill="none" stroke="#111" stroke-width="3"/></svg>FORGE</span>
    <span class="bm"><svg><use href="#docs"/></svg>****</span>
    <span class="bm"><svg viewBox="0 0 32 32"><path d="M16 30C8 24 0 17 0 9 0 1 12-1 16 7z" fill="#3d6cf0"/><path d="M16 30c8-6 16-13 16-21 0-8-12-10-16-2z" fill="#d8407c"/><path d="M3 17c6-2 13 0 13-10l4 8-4 15C10 26 5 22 3 17z" fill="#2c3461"/><circle cx="9" cy="10" r="4" fill="#fff"/></svg>PA</span>
    <span class="bm"><svg viewBox="0 0 32 32"><circle cx="16" cy="16" r="16" fill="#5fd068"/><path d="M7 11c6-2 13-1 18 2M8 17c5-1 11-1 15 2M9 22c4-1 8 0 12 2" fill="none" stroke="#fff" stroke-width="2.800"/></svg>S</span>
    <span class="bm"><svg><use href="#drive"/></svg>RENOVA</span>
    <span class="bm"><svg viewBox="0 0 32 32"><path d="M2 16h6v14H2z" fill="#e8453c"/><path d="M9 10h6v12H9z" fill="#f6b52c"/><path d="M17 2h6v18h-6z" fill="#4ba35b"/><path d="M4 29l8-7 5 6 11-13" fill="none" stroke="#3b7bea" stroke-width="4"/></svg>MERVAL</span>
    <span class="bm"><svg viewBox="0 0 32 32"><path d="M16 0c6 0 10 5 10 10 0 6-5 8-6 13h-8C11 18 6 16 6 10 6 5 10 0 16 0z" fill="#fbee8e"/><path d="M12 8c0-3 4-4 6-2" stroke="#fffbd6" stroke-width="3" fill="none"/><path d="M13 24h6v7h-6z" fill="#b9b9bc"/></svg>Padlet</span>
    <span class="bm"><svg viewBox="0 0 32 32"><rect y="5" width="32" height="22" rx="5" fill="#ea2f3c"/><path d="M13 11l8 5-8 5z" fill="#fff"/></svg>YTStudio</span>
    <span class="bm"><svg viewBox="0 0 32 32" fill="none" stroke="#474747" stroke-width="2.600"><path d="M7 8l7.500 8L7 24M17 8l7.500 8L17 24"/></svg></span>
  </div>

  <div class="page">
    <header class="topnav">
      <div class="brand">
        <span class="logo"><svg class="ln"><use href="#building"/></svg></span>
        <div class="brand-text"><strong>AI GYM</strong><small>by AI Workify</small></div>
      </div>
      <nav class="links">
        <a><svg class="ln" viewBox="0 0 24 24"><path d="m3 9 9-7 9 7v11a2 2 0 0 1-2 2H5a2 2 0 0 1-2-2zM9 22V12h6v10"/></svg><span>Dashboard</span></a>
        <a><svg class="ln"><use href="#building"/></svg><span>Communities</span></a>
        <a><svg class="ln" viewBox="0 0 24 24"><path d="M16 21v-2a4 4 0 0 0-4-4H6a4 4 0 0 0-4 4v2M22 21v-2a4 4 0 0 0-3-3.870M16 3.130a4 4 0 0 1 0 7.750"/><circle cx="9" cy="7" r="4"/></svg><span>Users</span></a>
        <a><svg class="ln" viewBox="0 0 24 24"><path d="M12.586 2.586A2 2 0 0 0 11.172 2H4a2 2 0 0 0-2 2v7.172a2 2 0 0 0 .586 1.414l8.704 8.704a2.426 2.426 0 0 0 3.420 0l6.580-6.580a2.426 2.426 0 0 0 0-3.420z"/><circle cx="7.500" cy="7.500" r=".5"/></svg><span>Tags</span></a>
        <a><svg class="ln"><use href="#dumbbell"/></svg><span>Training Zone</span></a>
        <a class="content"><svg class="ln" viewBox="0 0 24 24"><path d="M15 2H6a2 2 0 0 0-2 2v16a2 2 0 0 0 2 2h12a2 2 0 0 0 2-2V7ZM14 2v4a2 2 0 0 0 2 2h4M10 9H8M16 13H8M16 17H8"/></svg><span>Content</span><svg class="ln caret"><use href="#chev"/></svg></a>
      </nav>
      <div class="account">
        <span class="avatar">E</span>
        <div class="who"><span class="mail">ez@aiworkify.com</span><span class="role">Super Admin</span></div>
        <svg class="ln"><use href="#chev"/></svg>
      </div>
    </header>

    <main class="content-col">
      <div class="head">
        <svg class="ln back" viewBox="0 0 24 24"><path d="m12 19-7-7 7-7M19 12H5"/></svg>
        <span class="head-icon"><svg class="ln"><use href="#dumbbell"/></svg></span>
        <div class="head-text"><h1>Create New WOD</h1><p>Design a new workout of the day</p></div>
        <button class="primary"><svg class="ln" viewBox="0 0 24 24"><path d="M15.200 3a2 2 0 0 1 1.400.6l3.800 3.800a2 2 0 0 1 .6 1.400V19a2 2 0 0 1-2 2H5a2 2 0 0 1-2-2V5a2 2 0 0 1 2-2zM17 21v-7a1 1 0 0 0-1-1H8a1 1 0 0 0-1 1v7M7 3v4a1 1 0 0 0 1 1h7"/></svg><span>Create WOD</span></button>
      </div>
      <div class="alert"><svg class="ln" viewBox="0 0 24 24"><circle cx="12" cy="12" r="10"/><path d="M12 8v4M12 16h.01"/></svg><span>Edge Function returned a non-2xx status code</span></div>

      <form class="card">
        <section>
          <h2><span>Basic Information</span></h2>
          <div class="stack">
            <div><label>Title *</label><div class="field">WOD1</div></div>
            <div><label>Description</label><div class="field area">Hola<svg class="grip" viewBox="0 0 18 18"><path d="M2 16L16 2M10 16l6-6"/></svg></div></div>
          </div>
          <div class="two after-area">
            <div><label><svg class="ln" viewBox="0 0 24 24"><rect x="3" y="3" width="18" height="18" rx="2"/><circle cx="9" cy="9" r="2"/><path d="m21 15-3.086-3.086a2 2 0 0 0-2.828 0L6 21"/></svg><span>Thumbnail URL</span></label><div class="field hint">https://example.com/image.jpg</div></div>
            <div><label><svg class="ln" viewBox="0 0 24 24"><path d="M2.062 12.348a1 1 0 0 1 0-.696 10.750 10.750 0 0 1 19.876 0 1 1 0 0 1 0 .696 10.750 10.750 0 0 1-19.876 0"/><circle cx="12" cy="12" r="3"/></svg><span>Publication Status</span></label><div class="field select"><span>Published</span><svg viewBox="0 0 18 11"><path d="M1.500 1.500L9 9l7.500-7.500"/></svg></div></div>
          </div>
        </section>
        <section>
          <h2><span>Workout Details</span></h2>
          <div class="two">
            <div><label><svg class="ln" viewBox="0 0 24 24"><circle cx="12" cy="12" r="10"/><path d="M12 6v6l4 2"/></svg><span>Estimated Duration (minutes) *</span></label><div class="field">30</div></div>
            <div><label><svg class="ln" viewBox="0 0 24 24"><circle cx="12" cy="12" r="10"/><circle cx="12" cy="12" r="6"/><circle cx="12" cy="12" r="2"/></svg><span>Difficulty Level</span></label><div class="field select"><span>Beginner</span><svg viewBox="0 0 18 11"><path d="M1.500 1.500L9 9l7.500-7.500"/></svg></div></div>
          </div>
        </section>
        <section>
          <h2 class="tags-title"><svg class="ln" viewBox="0 0 24 24"><path d="M4 9h16M4 15h16M10 3 8 21M16 3l-2 18"/></svg><span>Tags</span></h2>
          <div class="tag-row"><div class="field hint">Add a tag...</div><button class="add" type="button">Add</button></div>
        </section>
      </form>
    </main>

    <div class="toast"><svg class="toast-wave"><use href="#wave"/></svg><span>Created by MiniMax Agent</span><svg class="close" viewBox="0 0 14 14"><path d="M1 1l12 12M13 1L1 13"/></svg></div>
  </div>
</div>
</body>
</html>
```
FILE: styles.css
```css
* { box-sizing: border-box; }
html, body { margin: 0; width: 3600px; height: 2338px; overflow: hidden; }
body {
  display: flex; flex-direction: column; position: relative;
  font-family: Inter, "Liberation Sans", sans-serif;
  background: linear-gradient(90deg, #c9ccca 0, #8d9596 30%, #46536a 100%);
  color: #111827;
}
svg { flex: none; display: block; }
.gradients { position: absolute; width: 0; height: 0; }
.sprite { display: none; }
.serif { font-family: "Liberation Serif", serif; }
.ln { width: 32px; height: 32px; fill: none; stroke: currentColor; stroke-width: 2; stroke-linecap: round; stroke-linejoin: round; }

/* macOS menu bar */
.menubar {
  height: 87px; flex: none; display: flex; justify-content: space-between; align-items: center;
  background: linear-gradient(90deg, #ebebea 0, #ebecea 45%, #e0e3e3 75%, #d8dce1 100%);
  font-size: 26px; color: #000; padding-bottom: 1px;
}
.menus { display: grid; align-items: center; padding-left: 40px; grid-template-columns: 68px 142px 84px 88px 100px 128px 176px 132px 84px 138px 80px; letter-spacing: -.35px; }
.menus b { font-weight: 700; letter-spacing: 0; }
.apple { width: 28px; height: 32px; margin-top: -6px; }
.status { display: grid; align-items: center; justify-items: center; color: #222; fill: #222; flex: none;
  grid-template-columns: 82px 82px 90px 60px 86px 82px 90px 58px 84px 50px 89px 58px 104px 34px 100px 162px 106px; }
.status svg { width: 32px; height: 32px; }
.status .wide { width: 38px; }
.status .vol { width: 40px; }
.status .batt { width: 52px; }
.pct { font-size: 22px; letter-spacing: -.6px; justify-self: end; padding-right: 6px; }
.day { justify-self: start; padding-left: 1px; letter-spacing: .3px; white-space: nowrap; }
.time { justify-self: start; }

/* browser window */
.window { flex: 1; min-height: 0; display: flex; flex-direction: column; border-radius: 22px 22px 20px 20px; overflow: hidden; background: #dfe5da; border-top: 1px solid #8b8f8c; }
.tabstrip { height: 80px; flex: none; display: flex; align-items: center; box-shadow: inset 0 2px #f0f3ee; }
.lights { display: flex; gap: 16px; width: 178px; padding-left: 42px; flex: none; }
.lights i { width: 24px; height: 24px; border-radius: 50%; }
.red { background: #ed6a5f; } .amber { background: #f5bd4f; } .green { background: #61c454; }
.pinned { display: flex; width: 142px; flex: none; }
.tab { width: 66px; height: 80px; display: grid; place-items: center; position: relative; flex: none; }
.pinned .tab { width: 68px; }
.tab > * { grid-area: 1 / 1; }
.tab.sep::after { content: ""; width: 4px; height: 32px; background: #bfcbb9; position: absolute; right: -2px; top: 24px; border-radius: 2px; }
.fav { width: 32px; height: 32px; color: #222; }
.fav.small { width: 27px; height: 27px; }
.fav.white { color: #ffd9df; }
.fav.round { border-radius: 50%; }
.ring { width: 40px; height: 40px; }
.active-tab { width: 64px; height: 68px; margin-top: 12px; background: #fbf9f7; border-radius: 18px 18px 0 0; position: relative; display: grid; place-items: center; padding-bottom: 12px; flex: none; }
.active-tab::before, .active-tab::after { content: ""; position: absolute; bottom: 0; width: 22px; height: 22px; }
.active-tab::before { left: -22px; background: radial-gradient(circle at 0 0, transparent 21.500px, #fbf9f7 22px); }
.active-tab::after { right: -22px; background: radial-gradient(circle at 100% 0, transparent 21.500px, #fbf9f7 22px); }
.active-tab svg { width: 16px; height: 16px; stroke: #1f201d; stroke-width: 2.600; }
.tabs { display: flex; padding-left: 8px; flex: 1; }
.plus { width: 22px; height: 22px; stroke: #3d413a; stroke-width: 2.600; }
.tabsearch { width: 56px; height: 56px; border-radius: 20px; background: #e8f2df; margin-right: 12px; display: grid; place-items: center; }
.tabsearch svg { width: 16px; height: 10px; fill: none; stroke: #1f201d; stroke-width: 3; }

.toolbar { height: 92px; flex: none; display: flex; align-items: center; background: #fbf9f7; border-radius: 18px 18px 0 0; }
.navbtns { width: 240px; display: grid; grid-template-columns: 71px 73px 32px; padding-left: 28px; flex: none; }
.navbtns svg { width: 32px; height: 32px; fill: none; stroke: #474747; stroke-width: 2.800; }
.navbtns .off { stroke: #b0afad; }
.omnibox { width: 2914px; height: 68px; border-radius: 34px; background: #e9ebe6; display: flex; align-items: center; flex: none; padding-left: 10px; }
.tune { width: 48px; height: 48px; border-radius: 50%; background: #fbf9f7; display: grid; place-items: center; }
.tune svg { width: 26px; height: 26px; fill: none; stroke: #1f201d; stroke-width: 2.800; }
.url { flex: 1; padding-left: 17px; font-size: 28px; color: #474747; letter-spacing: -.28px; }
.host { color: #1f201d; letter-spacing: 0; }
.key { width: 38px; height: 32px; margin-right: 28px; }
.star { width: 36px; height: 36px; margin-right: 30px; }
.ext { width: 32px; height: 32px; margin-left: 36px; }
.puzzle { width: 38px; height: 38px; margin-left: 37px; }
.tsep { display: block; width: 4px; height: 32px; background: #dbe4d6; border-radius: 2px; }
.toolbar .tsep { margin-left: 32px; margin-right: 20px; }
.profile { width: 160px; height: 68px; border-radius: 34px; background: #dae6d3; display: flex; align-items: center; gap: 13px; padding-left: 20px; font-size: 26px; font-weight: 500; color: #1f201d; letter-spacing: -.8px; flex: none; }
.profile svg { width: 40px; height: 40px; }
.kebab { width: 8px; height: 32px; margin-left: 40px; fill: #474747; }

.bookmarks { height: 70px; flex: none; background: #fbf9f7; border-bottom: 2px solid #e2e2df; display: grid; align-items: center; padding: 0 0 12px 24px; font-size: 24px; color: #474747;
  grid-template-columns: 61px 35px 98px 96px 64px 112px 64px 64px 64px 109px 62px 99px 64px 108px 64px 64px 64px 94px 64px 122px 114px 140px 138px 112px 158px 122px 108px 92px 173px 173px 148px 438px 60px; }
.bm { display: flex; align-items: center; gap: 13px; white-space: nowrap; letter-spacing: -.3px; }
.bm.dir { gap: 15px; }
.bm svg { width: 32px; height: 32px; color: #222; }

/* page */
.page { flex: 1; min-height: 0; position: relative; background: #f9fafc; border-radius: 0 0 20px 20px; }
.topnav { height: 130px; padding: 0 584px; background: #fff; border-bottom: 2px solid #e5e7eb; box-shadow: 0 2px 6px rgba(0,0,0,.06); display: flex; align-items: center; position: relative; }
.brand { display: flex; align-items: center; gap: 24px; width: 444px; }
.logo { width: 64px; height: 64px; border-radius: 16px; background: #3662e3; color: #fff; display: grid; place-items: center; }
.logo .ln { width: 40px; height: 40px; }
.brand-text { display: flex; flex-direction: column; }
.brand strong { font-size: 40px; line-height: 56px; font-weight: 700; letter-spacing: -1.400px; }
.brand small { font-size: 24px; line-height: 32px; color: #6b7280; letter-spacing: -.3px; }
.links { display: grid; grid-template-columns: 264px 293px 198px 182px 302px 382px; font-size: 28px; font-weight: 500; color: #6b7280; letter-spacing: -.28px; }
.links a { display: flex; align-items: center; gap: 8px; height: 40px; padding-top: 8px; }
.links .content { padding-top: 0; gap: 6px; }
.caret { width: 24px; height: 24px; margin-left: 4px; }
.account { display: flex; align-items: center; gap: 16px; color: #9ca3af; flex: 1; }
.avatar { width: 64px; height: 64px; border-radius: 50%; background: linear-gradient(90deg, #4480ee, #9333e4); color: #fff; font-size: 28px; font-weight: 600; display: grid; place-items: center; }
.who { display: flex; flex-direction: column; width: 239px; white-space: nowrap; }
.mail { font-size: 28px; line-height: 40px; font-weight: 500; color: #111827; letter-spacing: -.6px; }
.role { font-size: 24px; line-height: 32px; color: #6b7280; letter-spacing: -.2px; }

.content-col { width: 1792px; margin: 0 auto; padding-top: 48px; }
.head { display: flex; align-items: center; height: 104px; margin-bottom: 64px; }
.back { width: 40px; height: 40px; margin: 0 48px 0 16px; color: #4b5563; }
.head-icon { width: 80px; height: 80px; border-radius: 16px; background: #da622a; color: #fff; display: grid; place-items: center; margin-right: 24px; }
.head-icon .ln { width: 40px; height: 40px; }
.head-text { flex: 1; }
h1 { margin: 0; font-size: 48px; line-height: 64px; font-weight: 700; letter-spacing: -1.300px; }
.head p { margin: 0; font-size: 28px; line-height: 40px; color: #4b5563; letter-spacing: -.45px; }
button { border: 0; font: inherit; border-radius: 16px; }
.primary { height: 80px; width: 285px; padding: 0 0 0 24px; display: flex; align-items: center; gap: 16px; background: #da622a; color: #fff; font-size: 32px; font-weight: 500; white-space: nowrap; letter-spacing: -.85px; }
.alert { height: 116px; border: 2px solid #f5c9c8; border-radius: 16px; background: #fdf3f2; color: #af2a24; padding: 0 32px; display: flex; align-items: center; gap: 24px; font-size: 32px; margin-bottom: 64px; letter-spacing: -.66px; }
.alert .ln { width: 40px; height: 40px; color: #e0504c; }
.card { border: 2px solid #e5e7eb; border-radius: 24px; background: #fff; padding: 48px; box-shadow: 0 2px 5px rgba(0,0,0,.05); }
section + section { border-top: 2px solid #e5e7eb; margin-top: 48px; padding-top: 48px; }
h2 { margin: 0 0 32px; font-size: 36px; line-height: 56px; font-weight: 600; display: flex; align-items: center; letter-spacing: -.7px; }
.tags-title .ln { width: 40px; height: 40px; margin-right: 8px; }
.stack { display: flex; flex-direction: column; gap: 48px; }
label { display: flex; align-items: center; gap: 8px; height: 40px; margin-bottom: 16px; font-size: 28px; font-weight: 500; color: #374151; letter-spacing: -.2px; }
label .ln { margin-top: 6px; }
.field { height: 84px; border: 2px solid #d1d5db; border-radius: 16px; padding: 0 24px; font-size: 32px; line-height: 82px; color: #000; background: #fff; letter-spacing: -.75px; }
.area { height: 228px; padding-top: 16px; line-height: 50px; position: relative; }
.grip { position: absolute; right: 1px; bottom: 1px; width: 18px; height: 18px; stroke: #666; stroke-width: 1.600; }
.two { display: grid; grid-template-columns: 1fr 1fr; gap: 48px; align-items: start; }
.after-area { margin-top: 60px; }
.hint { color: #9ca3af; }
.select { height: 78px; display: flex; align-items: center; justify-content: space-between; padding: 0 7px 0 32px; line-height: 76px; }
.select svg { width: 18px; height: 11px; fill: none; stroke: #111; stroke-width: 2.400; }
.tag-row { display: flex; gap: 16px; }
.tag-row .field { flex: 1; }
.add { width: 122px; height: 84px; background: #f3f4f6; color: #374151; font-size: 32px; font-weight: 500; padding: 0; letter-spacing: -1px; }

.toast { position: absolute; right: 40px; bottom: 40px; width: 472px; height: 84px; border-radius: 24px; background: #222; color: #fff; display: flex; align-items: center; padding-left: 26px; font-size: 24px; font-weight: 600; white-space: nowrap; letter-spacing: -.15px; }
.toast-wave { width: 50px; height: 42px; }
.toast span { width: 304px; margin-left: 16px; }
.close { width: 15px; height: 15px; margin-left: 26px; margin-top: 4px; stroke: #bbb; stroke-width: 2; }
```
